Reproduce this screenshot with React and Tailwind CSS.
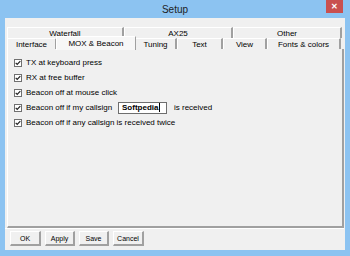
import React from 'react';

const font = { fontFamily: '"Liberation Sans", Arial, sans-serif' };

function Tab({ label, w, selected }) {
  if (selected) {
    return (
      <div
        className={`${w} h-[14px] -mt-[2px] -mx-[1px] relative z-10 bg-[#f7f7f7] border-l border-t border-white border-r border-r-[#a0a0a0] flex items-center justify-center text-[8px] text-black leading-none`}
      >
        {label}
      </div>
    );
  }
  return (
    <div
      className={`${w} h-full bg-[#f0f0f0] border-l border-t border-white border-r-2 border-r-[#a0a0a0] flex items-center justify-center text-[8px] text-black leading-none pt-[1px]`}
    >
      {label}
    </div>
  );
}

function Check({ children }) {
  return (
    <div className="h-[15px] flex items-center text-[8px] text-black leading-none">
      <div className="w-[8px] h-[8px] ml-[6px] mr-[4px] bg-white border border-[#707070] flex items-center justify-center">
        <svg width="6" height="6" viewBox="0 0 7 7">
          <path d="M0.8 3.3 L2.6 5.2 L6.2 1.2" stroke="#222" strokeWidth="1.4" fill="none" />
        </svg>
      </div>
      {children}
    </div>
  );
}

function Button({ label, w }) {
  return (
    <div
      className={`${w} h-[15px] bg-[#f0f0f0] border-t border-l border-white border-r-2 border-b-2 border-r-[#a0a0a0] border-b-[#a0a0a0] flex items-center justify-center text-[7px] text-black leading-none`}
    >
      {label}
    </div>
  );
}

export default function App() {
  return (
    <div className="w-[350px] h-[256px] bg-[#8cc3f1] flex flex-col overflow-hidden" style={font}>
      {/* Title bar */}
      <div className="h-[18px] relative flex items-center justify-center">
        <span className="text-[10px] text-[#1e1e1e]">Setup</span>
        <div className="absolute right-[7px] top-0 w-[17px] h-[13px] bg-[#c9504f] flex items-center justify-center">
          <span className="text-white text-[8px] font-bold leading-none">✕</span>
        </div>
      </div>

      {/* Client area */}
      <div className="mx-[5px] h-[232px] bg-[#f0f0f0] flex flex-col">
        <div className="h-[9px]" />
        <div className="ml-[2px] mr-[1px] flex flex-col">
          {/* Tab row 1 */}
          <div className="h-[11px] flex">
            <Tab label="Waterfall" w="w-[117px]" />
            <Tab label="AX25" w="w-[109px]" />
            <Tab label="Other" w="w-[109px]" />
          </div>
          {/* Tab row 2 */}
          <div className="h-[12px] flex items-end">
            <Tab label="Interface" w="w-[50px]" />
            <Tab label="MOX & Beacon" w="w-[80px]" selected />
            <Tab label="Tuning" w="w-[42px]" />
            <Tab label="Text" w="w-[46px]" />
            <Tab label="View" w="w-[44px]" />
            <Tab label="Fonts & colors" w="w-[74px]" />
          </div>
          {/* Tab page */}
          <div className="h-[179px] bg-[#f0f0f0] border-l border-white border-r-2 border-r-[#a0a0a0] border-b-2 border-b-[#a0a0a0] pt-[6px] -mt-[1px]">
            <Check>TX at keyboard press</Check>
            <Check>RX at free buffer</Check>
            <Check>Beacon off at mouse click</Check>
            <Check>
              <span className="w-[92px]">Beacon off if my callsign</span>
              <div className="w-[49px] h-[12px] bg-white border border-[#6e6e6e] flex items-center pl-[3px]">
                <span className="font-bold text-[8px] leading-none">Softpedia</span>
                <span className="w-px h-[9px] bg-black ml-[1px]" />
              </div>
              <span className="ml-[7px]">is received</span>
            </Check>
            <Check>Beacon off if any callsign is received twice</Check>
          </div>
        </div>

        {/* Buttons */}
        <div className="h-px bg-white mr-[1px]" />
        <div className="flex gap-[4px] pl-[5px] pt-[2px]">
          <Button label="OK" w="w-[31px]" />
          <Button label="Apply" w="w-[30px]" />
          <Button label="Save" w="w-[30px]" />
          <Button label="Cancel" w="w-[31px]" />
        </div>
      </div>
    </div>
  );
}
